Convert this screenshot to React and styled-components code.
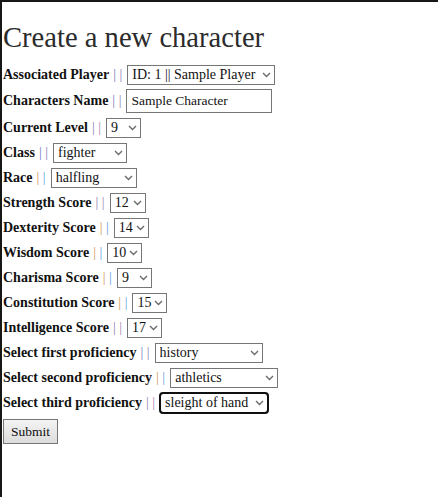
import React from "react";
import styled, { createGlobalStyle } from "styled-components";

const GlobalStyle = createGlobalStyle`
  html, body {
    margin: 0;
    padding: 0;
    background: #fff;
  }
  * {
    box-sizing: border-box;
  }
`;

const Page = styled.div`
  min-height: 100vh;
  border-top: 2px solid #161818;
  border-left: 2px solid #161818;
  padding: 19px 0 0 1px;
  font-family: "Liberation Serif", "Times New Roman", serif;
  color: #111;
`;

const Title = styled.h1`
  margin: 0 0 7px;
  font-size: 28.6px;
  line-height: 34px;
  font-weight: normal;
  color: #2b2b2b;
`;

const Form = styled.form`
  display: flex;
  flex-direction: column;
`;

const Row = styled.div`
  display: flex;
  align-items: center;
  height: ${(p) => p.h || 25}px;
`;

const Label = styled.span`
  font-weight: bold;
  font-size: 14px;
  white-space: nowrap;
`;

const Sep = styled.span`
  font-size: 14px;
  padding: 0 5px 0 4px;
  white-space: pre;
`;

const Pipe = styled.span`
  color: ${(p) => p.c};
`;

const SelectWrap = styled.span`
  position: relative;
  display: inline-flex;
  width: ${(p) => p.w}px;
  height: 20px;
`;

const Select = styled.select`
  appearance: none;
  -webkit-appearance: none;
  width: 100%;
  height: 100%;
  font-family: "Liberation Serif", "Times New Roman", serif;
  font-size: 14px;
  color: #111;
  background: #fff;
  border: 1px solid #767676;
  border-radius: ${(p) => (p.focused ? 3 : 0)}px;
  padding: 0 11px 0 4px;
  outline: ${(p) => (p.focused ? "2px solid #101010" : "none")};
  outline-offset: -1px;
  white-space: nowrap;
  overflow: hidden;
`;

const Chevron = styled.svg`
  position: absolute;
  right: 4px;
  top: 7px;
  width: 9px;
  height: 6px;
  pointer-events: none;
`;

const TextInput = styled.input`
  width: 146px;
  height: 24px;
  font-family: "Liberation Serif", "Times New Roman", serif;
  font-size: 13.5px;
  color: #111;
  border: 1px solid #767676;
  padding: 0 4px;
  outline: none;
`;

const SubmitButton = styled.button`
  align-self: flex-start;
  margin-top: 4px;
  height: 25px;
  padding: 0 7px;
  font-family: "Liberation Serif", "Times New Roman", serif;
  font-size: 13.5px;
  color: #111;
  background: linear-gradient(#f3f3f3, #dcdcdc);
  border: 1px solid #767676;
  border-radius: 0;
`;

const blue = ["#717bc4", "#8a80bc"];
const warm = ["#d39654", "#5f9fdc"];
const purple = ["#9080b4", "#a484b0"];

const Pipes = ({ colors }) => (
  <Sep>
    <Pipe c={colors[0]}>|</Pipe> <Pipe c={colors[1]}>|</Pipe>
  </Sep>
);

const Dropdown = ({ w, value, opts, focused }) => (
  <SelectWrap w={w}>
    <Select defaultValue={value} focused={focused}>
      {opts.map((o) => (
        <option key={o} value={o}>
          {o}
        </option>
      ))}
    </Select>
    <Chevron viewBox="0 0 9 6">
      <path d="M1 1l3.5 3.5L8 1" fill="none" stroke="#6b6b6b" strokeWidth="1.4" />
    </Chevron>
  </SelectWrap>
);

const range = Array.from({ length: 20 }, (_, i) => String(i + 1));
const profs = ["history", "athletics", "sleight of hand"];

const fields = [
  { label: "Current Level", value: "9", w: 35, pipes: purple, opts: range },
  { label: "Class", value: "fighter", w: 74, pipes: blue, opts: ["fighter", "wizard", "rogue", "cleric"] },
  { label: "Race", value: "halfling", w: 86, pipes: warm, opts: ["halfling", "human", "elf", "dwarf"] },
  { label: "Strength Score", value: "12", w: 36, pipes: purple, opts: range },
  { label: "Dexterity Score", value: "14", w: 35, pipes: warm, opts: range },
  { label: "Wisdom Score", value: "10", w: 35, pipes: warm, opts: range },
  { label: "Charisma Score", value: "9", w: 35, pipes: warm, opts: range },
  { label: "Constitution Score", value: "15", w: 35, pipes: warm, opts: range },
  { label: "Intelligence Score", value: "17", w: 35, pipes: purple, opts: range },
  { label: "Select first proficiency", value: "history", w: 108, pipes: blue, opts: profs },
  { label: "Select second proficiency", value: "athletics", w: 108, pipes: warm, opts: profs },
  { label: "Select third proficiency", value: "sleight of hand", w: 108, pipes: purple, opts: profs, focused: true },
];

export default function App() {
  return (
    <Page>
      <GlobalStyle />
      <Title>Create a new character</Title>
      <Form onSubmit={(e) => e.preventDefault()}>
        <Row>
          <Label>Associated Player</Label>
          <Pipes colors={blue} />
          <Dropdown w={148} value="1" opts={["ID: 1 || Sample Player"]} />
        </Row>
        <Row h={28}>
          <Label>Characters Name</Label>
          <Pipes colors={blue} />
          <TextInput defaultValue="Sample Character" />
        </Row>
        {fields.map((f) => (
          <Row key={f.label}>
            <Label>{f.label}</Label>
            <Pipes colors={f.pipes} />
            <Dropdown w={f.w} value={f.value} opts={f.opts} focused={f.focused} />
          </Row>
        ))}
        <SubmitButton type="submit">Submit</SubmitButton>
      </Form>
    </Page>
  );
}
